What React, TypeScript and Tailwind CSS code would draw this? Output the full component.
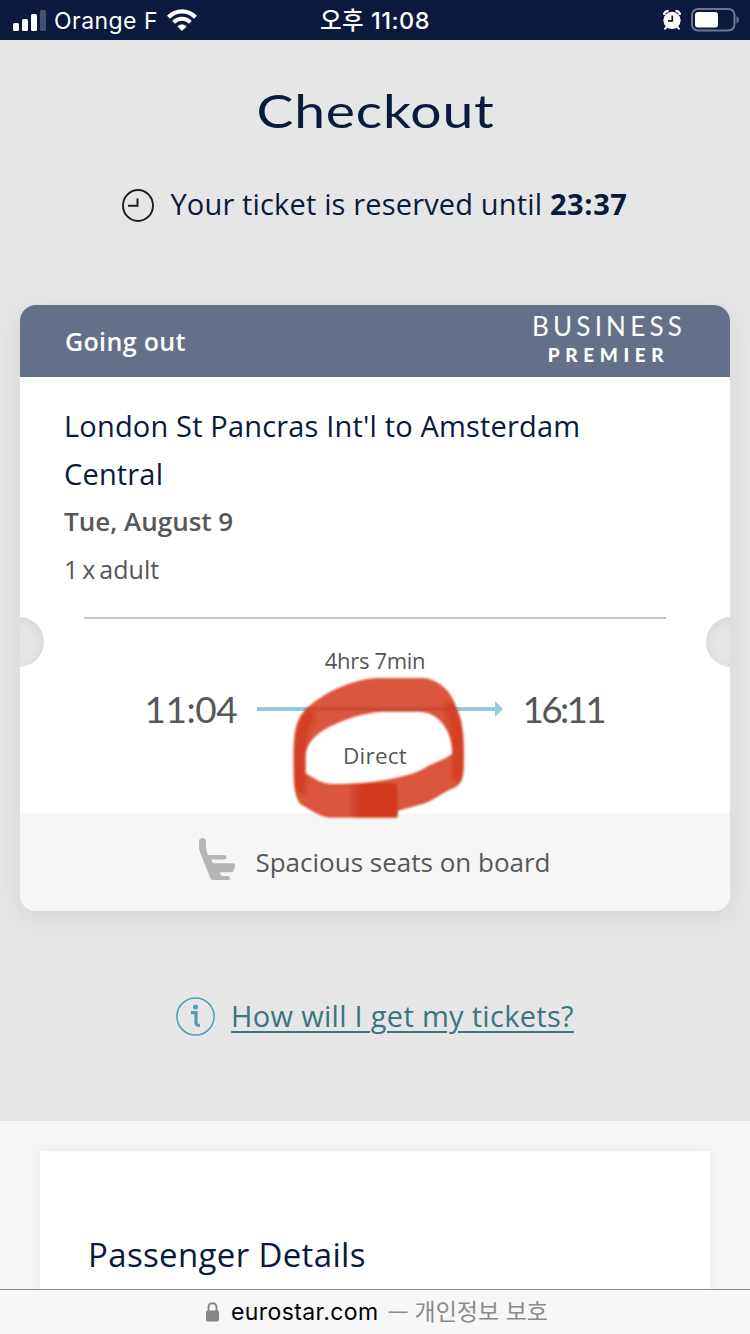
import React from 'react';

const SignalIcon = () => (
  <svg className="h-[22px] w-[33px]" viewBox="0 0 33 22" fill="#fff">
    <rect x="0" y="14" width="6" height="8" rx="1.5" />
    <rect x="9" y="10" width="6" height="12" rx="1.5" />
    <rect x="18" y="5" width="6" height="17" rx="1.5" />
    <rect x="27" y="1" width="6" height="21" rx="1.5" fill="#47506e" />
  </svg>
);

const WifiIcon = () => (
  <svg className="h-[22px] w-[30px]" viewBox="0 0 30 22" fill="none" stroke="#fff" strokeWidth="4.2">
    <path d="M1.5 8.2 C9 .3 21 .3 28.500 8.200" />
    <path d="M6.600 13.300 C11.300 8.600 18.700 8.600 23.400 13.300" strokeWidth="3.900" />
    <path d="M15 22 L10.400 17.400 C12.900 15 17.100 15 19.600 17.400 Z" fill="#fff" stroke="none" />
  </svg>
);

const AlarmIcon = () => (
  <svg className="h-[20px] w-[18px]" viewBox="0 0 18 20">
    <g stroke="#fff" strokeWidth="2" strokeLinecap="round">
      <path d="M4 16.500 L2 18.800 M14 16.500 L16 18.800" />
      <path d="M1.200 3.800 Q1.800 1.500 4.500 1.100 M16.800 3.800 Q16.200 1.500 13.500 1.100" strokeWidth="2.400" />
    </g>
    <circle cx="9" cy="10.300" r="8.600" fill="#fff" />
    <path d="M9.300 5.400 V10.800 H5" fill="none" stroke="#0a1a3c" strokeWidth="1.700" />
  </svg>
);

const BatteryIcon = () => (
  <svg className="h-[24px] w-[48px]" viewBox="0 0 48 24">
    <rect x="1" y="1" width="42.500" height="21.500" rx="6" fill="none" stroke="#6d7690" strokeWidth="2" />
    <rect x="4" y="4" width="23" height="15.500" rx="3" fill="#fff" />
    <path d="M45.500 8 Q48 9.300 48 11.800 Q48 14.300 45.500 15.600 Z" fill="#6d7690" />
  </svg>
);

const ClockIcon = () => (
  <svg className="h-[33px] w-[32px]" viewBox="0 0 32 33" fill="none" stroke="#1d1d1b">
    <ellipse cx="16" cy="16.500" rx="15" ry="15.500" strokeWidth="1.900" />
    <path d="M15.500 9.500 V16.700 H6" strokeWidth="2" />
  </svg>
);

const SeatIcon = () => (
  <svg className="h-[44px] w-[37px]" viewBox="0 0 37 44" fill="#b5b5b5">
    <path d="M0 4 C0 0 7 0 7 4 V9 Q7 13 8.800 18 H25 Q27.500 18.300 27.500 20.300 Q27.500 22.500 25 22.500 H12 L14 26.300 H34 Q36.300 26.500 36 29 L35 33 Q34.500 35.300 32 35.300 H20.500 L22.500 39 H29 Q31 39.300 31 41 Q31 43 29 43 H14 Q12 43 11.400 41.300 L1 15 Q0 12 0 9 Z" />
  </svg>
);

const InfoIcon = () => (
  <svg className="h-[39px] w-[39px]" viewBox="0 0 39 39" fill="none" stroke="#4c9fb4">
    <circle cx="19.500" cy="19.500" r="18.600" strokeWidth="1.500" />
    <circle cx="19.500" cy="10" r="2.500" fill="#4c9fb4" stroke="none" />
    <path d="M15 15.700 H20 V26 Q20 28.500 24 28.500" strokeWidth="3.200" />
  </svg>
);

const LockIcon = () => (
  <svg className="h-[20px] w-[13px]" viewBox="0 0 13 20">
    <rect x="0" y="8.500" width="13" height="11" rx="1.800" fill="#868688" />
    <path d="M2.500 9.500 V5.500 Q2.500 1.200 6.500 1.200 Q10.500 1.200 10.500 5.500 V9.500" fill="none" stroke="#868688" strokeWidth="1.900" />
  </svg>
);

// Hand drawn marker ring around the "Direct" label
const MarkerRing = () => (
  <svg className="absolute left-[240px] top-[640px] h-[200px] w-[280px]" viewBox="0 0 840 600">
    <defs>
      <filter id="soft"><feGaussianBlur stdDeviation="2.500" /></filter>
      <filter id="softer" x="-50%" y="-50%" width="200%" height="200%"><feGaussianBlur stdDeviation="8" /></filter>
      <clipPath id="ring">
        <path clipRule="evenodd" d="M160 370 C160 290 163 245 195 210 C235 168 330 113 430 113 H545 C600 118 635 155 650 205 C668 240 672 290 672 340 C672 420 668 430 640 445 C600 462 585 478 555 490 L475 512 L472 533 H270 C240 530 225 517 185 495 C164 480 160 430 160 370 Z M197 400 C225 415 240 432 280 432 C350 433 400 428 460 415 C530 400 545 390 560 380 C590 366 615 357 636 343 C638 310 628 265 590 233 C570 219 555 215 530 215 H430 C370 218 315 237 265 262 C215 290 197 320 197 350 Z" />
      </clipPath>
      <linearGradient id="overlap">
        <stop offset="0" stopColor="#d2361b" stopOpacity=".3" />
        <stop offset=".25" stopColor="#d2361b" stopOpacity=".9" />
        <stop offset="1" stopColor="#d2361b" stopOpacity=".9" />
      </linearGradient>
    </defs>
    <g filter="url(#soft)">
      <g clipPath="url(#ring)">
        <rect width="840" height="600" fill="#d94f36" fillOpacity=".96" />
        <g filter="url(#softer)" fill="none">
          <path d="M215 215 C172 270 178 350 180 460" stroke="#d03418" strokeOpacity=".75" strokeWidth="36" />
          <path d="M625 190 C660 260 655 340 653 420" stroke="#d03418" strokeOpacity=".75" strokeWidth="36" />
        </g>
        <path d="M195 207 H650" stroke="#b9412f" strokeOpacity=".5" strokeWidth="9" />
        <rect x="330" y="430" width="142" height="105" rx="12" fill="url(#overlap)" />
      </g>
    </g>
  </svg>
);

const App = () => {
  return (
    <div className="relative flex h-[1334px] w-[750px] flex-col overflow-hidden bg-[#e6e6e6] font-['Open_Sans',sans-serif] text-[#0a1a3c]">
      <header className="grid h-[40px] shrink-0 grid-cols-3 items-center bg-[#0a1a3c] font-['Inter','Noto_Sans_CJK_KR',sans-serif] text-white">
        <div className="flex items-center pl-[13px]">
          <SignalIcon />
          <span className="ml-[8px] whitespace-nowrap pt-0.5 text-[23px] leading-[38px] tracking-[0.450px]">Orange F</span>
          <span className="ml-[9px]"><WifiIcon /></span>
        </div>
        <div className="pt-0.5 text-center text-[23.500px] font-medium leading-[38px] tracking-[0.500px]">오후 11:08</div>
        <div className="flex items-center justify-end pr-[11px]">
          <AlarmIcon />
          <span className="ml-[10px]"><BatteryIcon /></span>
        </div>
      </header>

      <main className="flex h-[1081px] shrink-0 flex-col px-5">
        <h1 className="mt-[41px] scale-x-[1.2] pl-px text-center font-['Lato',sans-serif] text-[46px] leading-[60px] tracking-[0.700px]">Checkout</h1>
        <div className="mt-[39px] flex h-[50px] items-center justify-center">
          <ClockIcon />
          <p className="ml-4 whitespace-nowrap pb-0.5 text-[29px] tracking-[0.160px]">
            Your ticket is reserved until <b className="tracking-[0.600px]">23:37</b>
          </p>
        </div>

        <section className="relative mt-[75px] h-[606px] overflow-hidden rounded-2xl bg-white shadow-[0_6px_22px_rgba(60,70,100,0.10)]">
          <div className="flex h-[72px] items-center justify-between bg-[#64708a] pl-[45px] pr-[44px] text-white">
            <span className="pt-px text-[25px] font-semibold tracking-[0.350px]">Going out</span>
            <div className="flex flex-col items-center pb-0.5 font-['Lato',sans-serif]">
              <span className="text-[26px] leading-[29px] tracking-[4.200px]">BUSINESS</span>
              <span className="pr-px text-[19px] font-black leading-[28px] tracking-[5.600px]">PREMIER</span>
            </div>
          </div>
          <div className="h-[240px] px-[44px] pt-[25px] text-[#565759]">
            <h2 className="w-[560px] text-[29px] leading-[48px] tracking-[0.170px] text-[#0a1a3c]">London St Pancras Int'l to Amsterdam Central</h2>
            <p className="-mt-px text-[26px] font-semibold leading-[48px]">Tue, August 9</p>
            <p className="text-[25px] leading-[48px] [word-spacing:-2.500px]">1 x adult</p>
          </div>
          <div className="mx-16 h-[2px] bg-[#c6c6c8]" />
          <div className="absolute -left-[26px] top-[312px] size-[50px] rounded-full bg-[#e6e6e6] shadow-[inset_0_2px_12px_rgba(0,0,0,0.08)]" />
          <div className="absolute -right-[26px] top-[312px] size-[50px] rounded-full bg-[#e6e6e6] shadow-[inset_0_2px_12px_rgba(0,0,0,0.08)]" />
          <div className="flex h-[194px] flex-col items-center pt-[25px] text-[#565759]">
            <span className="text-[22px] leading-[32px] tracking-[-0.300px]">4hrs 7min</span>
            <div className="flex h-[66px] items-center">
              <span className="-ml-px w-[92px] whitespace-nowrap font-['Lato',sans-serif] text-[37px] tracking-[-0.500px]">11:04</span>
              <svg className="mx-5 h-4 w-[246px]" viewBox="0 0 246 16" fill="#93cbd7">
                <path d="M0 6 H238 V0 L246 8 L238 16 V10 H0 Z" />
              </svg>
              <span className="w-[82px] whitespace-nowrap font-['Lato',sans-serif] text-[37px] tracking-[-2.700px]">16:11</span>
            </div>
            <span className="-mt-1 text-[22.500px] leading-[36px] tracking-[0.200px]">Direct</span>
          </div>
          <div className="flex h-[98px] items-center justify-center bg-[#f6f6f6] text-[#565759]">
            <span className="-mt-1.5"><SeatIcon /></span>
            <span className="ml-[19px] text-[26px]">Spacious seats on board</span>
          </div>
        </section>

        <a className="mt-[80px] flex h-[50px] items-center justify-center text-[#387782]">
          <InfoIcon />
          <span className="ml-4 text-[29px] tracking-[0.300px] underline decoration-2 underline-offset-4">How will I get my tickets?</span>
        </a>
      </main>

      <section className="h-[168px] shrink-0 bg-[#f7f7f7] px-10 pt-[30px]">
        <div className="h-[138px] bg-white pl-[48px] pt-[79px] shadow-[0_0_12px_rgba(0,0,0,0.07)]">
          <h2 className="text-[33px] leading-[50px] tracking-[0.350px]">Passenger Details</h2>
        </div>
      </section>

      <footer className="relative flex h-[45px] items-center justify-center border-t border-[#88898b] bg-[#f7f7f8] pl-1 font-['Inter','Noto_Sans_CJK_KR',sans-serif] text-[23px]">
        <LockIcon />
        <span className="ml-3 tracking-[0.400px] text-black">eurostar.com</span>
        <span className="ml-2.5 flex gap-[7px] text-[#8a8a8c]">
          <span className="w-[19px] text-[19px] leading-[34px]">—</span>
          <span>개인정보 보호</span>
        </span>
      </footer>

      <MarkerRing />
    </div>
  );
};

export default App;
